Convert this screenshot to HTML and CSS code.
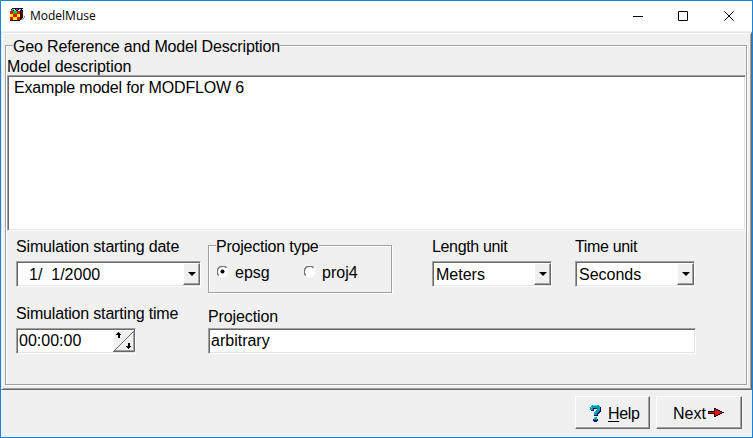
FILE: index.html
```html
<!DOCTYPE html>
<html lang="en">
<head>
<meta charset="utf-8">
<title>ModelMuse</title>
<link rel="stylesheet" href="styles.css">
</head>
<body>
<div class="window">
  <header class="titlebar">
    <svg class="app-icon" width="16" height="14" viewBox="0 0 16 14" shape-rendering="crispEdges">
      <path fill="#000" d="M2 0h11v10h-1v2h-2v1H0V3h1V1h1z"/>
      <path fill="#0ff" d="M2 1h2v1H2zM9 1h2v1H9zM4 2h2v1H4z"/><path fill="#f0f" d="M6 1h2v1H6zM1 2h2v1H1z"/>
      <path fill="#00f" d="M6 2h1v1H6zM10 2h1v1h-1z"/><path fill="#fff" d="M8 2h2v1H8zM4 1h1v1H4zM12 1h1v1h-1z"/>
      <path fill="#f00" d="M0 3h3v3H0zM7 3h3v3H7zM3 6h4v3H3zM0 9h3v3H0zM7 9h3v3H7z"/>
      <path fill="#ff0" d="M0 6h3v3H0zM7 6h3v3H7zM3 9h4v3H3z"/><path fill="#0c0" d="M3 3h4v3H3z"/>
      <path fill="#800000" d="M11 3h1v2h-1zM11 7h1v2h-1zM12 5h1v2h-1z"/>
      <path fill="#a0a0a0" d="M14 8h1v2h-1v1h-1v1h-2v-1h1v-1h2z"/>
    </svg>
    <span class="title">ModelMuse</span>
    <svg class="controls" width="102" height="12" viewBox="0 0 102 12" fill="none" stroke="#000">
      <path d="M0 5.5h10M45.5 .5h9v9h-9zM91.3.3l9.4 9.4M100.7.3l-9.4 9.4"/>
    </svg>
  </header>
  <main class="panel">
    <section class="group main-group">
      <h1 class="legend"><span>Geo Reference and Model Description</span></h1>
      <div class="label memo-label">Model description</div>
      <div class="sunken memo">Example model for MODFLOW 6</div>
      <div class="fields">
        <div class="dates">
          <div class="label">Simulation starting date</div>
          <div class="sunken combo date"><span>1/&nbsp; 1/2000</span><i class="drop"></i></div>
          <div class="label time-label">Simulation starting time</div>
          <div class="sunken combo time"><span>00:00:00</span>
            <svg width="22" height="22" viewBox="0 0 22 22" shape-rendering="crispEdges">
              <path fill="#f0f0f0" d="M0 0h22v22H0z"/><path fill="#fff" d="M0 0h22v1H1v20H0z"/>
              <path stroke="#696969" fill="none" d="M0 22L21 1M21.500 0v22M0 21.500h22"/>
              <path stroke="#a0a0a0" fill="none" d="M20.500 2v19M2 20.500h19"/>
              <path d="M5 2h1v1h1v1h1v1H6v3H5V5H3V4h1V3h1zM5 5h2v3H5zM15 13h2v3h1v1h-1v1h-1v1h-1v-1h-1v-1h-1v-1h2z"/>
            </svg>
          </div>
        </div>
        <div class="right">
          <div class="upper">
            <div class="group projection-type">
              <h2 class="legend"><span>Projection type</span></h2>
              <div class="radios">
                <span class="radio"><svg width="12" height="12" viewBox="0 0 12 12"><circle cx="6" cy="6" r="5.5" fill="#fff"/><path d="M1.800 9.500A5.300 5.300 0 0 1 9.500 1.800" fill="none" stroke="#777" stroke-width="1.500"/><circle cx="5.500" cy="5.500" r="2" fill="#000"/></svg>epsg</span>
                <span class="radio"><svg width="12" height="12" viewBox="0 0 12 12"><circle cx="6" cy="6" r="5.500" fill="#fff"/><path d="M1.800 9.500A5.300 5.300 0 0 1 9.500 1.800" fill="none" stroke="#777" stroke-width="1.500"/></svg>proj4</span>
              </div>
            </div>
            <div class="unit">
              <div class="label unit-label">Length unit</div>
              <div class="sunken combo"><span>Meters</span><i class="drop"></i></div>
            </div>
            <div class="unit">
              <div class="label unit-label">Time unit</div>
              <div class="sunken combo"><span>Seconds</span><i class="drop"></i></div>
            </div>
          </div>
          <div class="label projection-label">Projection</div>
          <div class="sunken combo projection"><span>arbitrary</span></div>
        </div>
      </div>
    </section>
  </main>
  <footer class="actions">
    <div class="button help">
      <svg width="12" height="17" viewBox="0 0 12 17" shape-rendering="crispEdges">
        <path fill="#000080" d="M3 1h7v1h1v5h-1v1H9v1H8v2H4V8h1V7h1V6h1V4H4v2H1V3h1V2h1zM4 13h3v1h1v2H7v1H4v-1H3v-2h1z"/>
        <path fill="#00a0a0" d="M2 0h7v1h1v5H9v1H8v1H7v2H4V7h1V6h1V5h1V3H3v2H0V2h1V1h1zM4 12h3v3H4z"/>
        <path fill="#0ff" d="M3 0h4v1H3zM1 2h1v1H1zM4 12h1v1H4z"/>
      </svg><span><u>H</u>elp</span>
    </div>
    <div class="button next"><span>Next</span>
      <svg width="16" height="10" viewBox="0 0 16 10" shape-rendering="crispEdges">
        <path d="M6 0h2v1h2v1h2v1h2v1h2v1h-2v1h-2v1h-2v1H8v1H6V6H0V3h6z"/>
        <path fill="#f00" d="M7 1h1v1h2v1h2v1h2v1h-2v1h-2v1H8v1H7V5H1V4h6z"/>
      </svg>
    </div>
  </footer>
</div>
</body>
</html>
```
FILE: styles.css
```css
* { box-sizing: border-box; }
body { margin: 0; font: 16px/18px "Liberation Sans", Arial, sans-serif; color: #000; }
.window { width: 753px; height: 438px; display: flex; flex-direction: column; border: 1px solid #1883d7; background: #f0f0f0; white-space: nowrap; }
.titlebar { height: 30px; flex: none; display: flex; align-items: flex-start; padding: 7px 17px 0 9px; background: #fff; }
.title { margin-left: 4px; font: 12px/16px "Open Sans", sans-serif; }
.controls { margin: 3px 0 0 auto; }
.panel { height: 358px; flex: none; margin-top: 1px; padding: 5px 3px 3px; border: 1px solid; border-color: #e3e3e3 #696969 #696969 #e3e3e3; box-shadow: inset 1px 1px #fff, inset -1px -1px #a0a0a0; }
.group { border: 1px solid #a0a0a0; box-shadow: inset 1px 1px #fff, 1px 1px #fff; }
.legend { margin: 0; height: 18px; font: inherit; letter-spacing: -0.15px; }
.legend span { display: inline-block; background: #f0f0f0; }
.main-group { width: 742px; height: 340px; margin-top: 7px; padding: 0 1px; }
.main-group > .legend { margin: -8px 0 0 6px; }
.sunken { background: #fff; border: 1px solid; border-color: #a0a0a0 #fff #fff #a0a0a0; box-shadow: inset 1px 1px #696969, inset -1px -1px #e3e3e3; }
.memo { width: 739px; height: 156px; padding: 3px 6px; letter-spacing: -0.18px; }
.fields { display: flex; padding: 7px 0 0 9px; }
.dates { width: 192px; }
.label { height: 18px; letter-spacing: -0.17px; }
.memo-label { height: 17px; margin-top: 2px; letter-spacing: -0.06px; }
.unit-label { letter-spacing: -0.35px; }
.combo { width: 120px; height: 26px; margin-top: 5px; display: flex; justify-content: space-between; padding: 4px 0 1px 3px; }
.combo > svg, .drop { flex: none; margin-top: -3px; }
.drop { display: flex; justify-content: center; align-items: center; width: 17px; height: 22px; background: #f0f0f0; border: 1px solid; border-color: #fff #696969 #696969 #fff; box-shadow: inset -1px -1px #a0a0a0; }
.drop::before { content: ""; border: solid transparent; border-width: 4px 4px 0; border-top-color: #000; }
.date { width: 185px; padding-left: 12px; letter-spacing: 0; }
.time-label { margin-top: 18px; }
.time, .projection { padding-left: 2px; }
.time { padding-top: 3px; }
.time > svg { margin-top: -2px; }
.upper { display: flex; height: 49px; }
.projection-type { width: 184px; height: 48px; margin-top: 7px; margin-right: 40px; }
.projection-type .legend { margin: -8px 0 0 7px; letter-spacing: -0.22px; }
.radios { display: flex; margin: 8px 0 0 8px; }
.radio { display: flex; gap: 6px; width: 87px; }
.radio svg { margin-top: 2px; }
.unit { width: 143px; }
.projection-label { margin-top: 21px; letter-spacing: -0.1px; }
.projection { width: 488px; margin-top: 2px; padding-top: 3px; }
.actions { display: flex; justify-content: flex-end; gap: 6px; padding: 6px 10px 0; }
.button { height: 33px; display: flex; align-items: flex-start; border: 1px solid; border-color: #fff #696969 #696969 #fff; box-shadow: inset -1px -1px #a0a0a0; padding-top: 8px; }
.help { width: 75px; padding-left: 14px; }
.help span { margin-left: 6px; letter-spacing: -0.3px; }
.next { width: 86px; padding-left: 16px; }
.next svg { margin: 3px 0 0 2px; }
u { text-underline-offset: 2px; }
```
